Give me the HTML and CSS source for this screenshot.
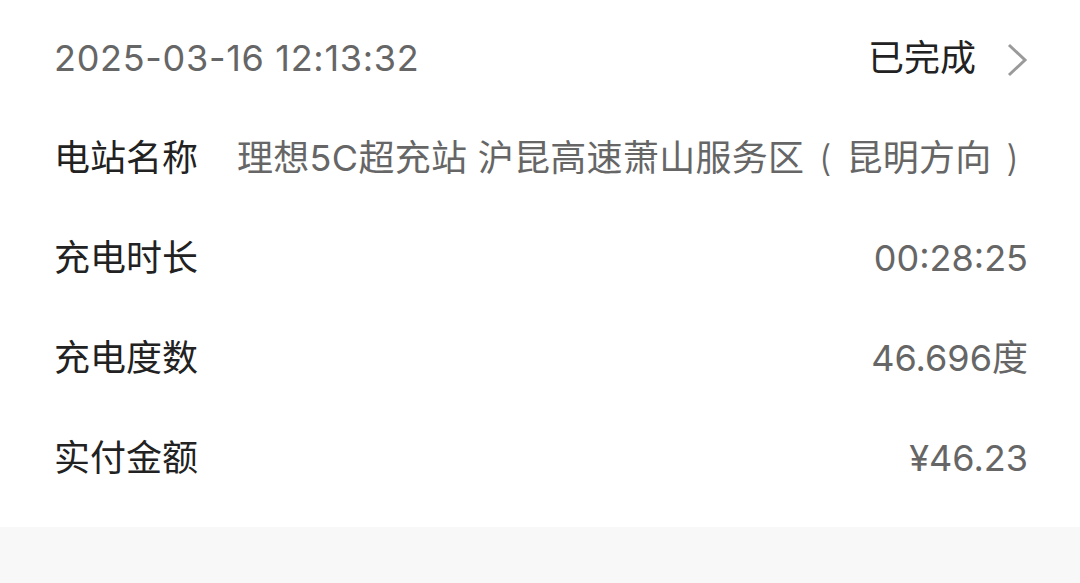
FILE: index.html
```html
<!DOCTYPE html>
<html lang="zh-CN">
<head>
<meta charset="utf-8">
<link rel="stylesheet" href="styles.css">
</head>
<body>
<div class="card">
  <div class="row head">
    <span class="date">2025-03-16 12:13:32</span>
    <span class="status">已完成
      <svg class="chev" width="22" height="34" viewBox="0 0 22 34"><path d="M3 2 L19 17 L3 32" fill="none" stroke="#9a9a9a" stroke-width="3"/></svg>
    </span>
  </div>
  <div class="row">
    <span class="label">电站名称</span>
    <span class="value station">理想5C超充站 沪昆高速萧山服务区<span class="paren">(</span>昆明方向<span class="paren">)</span></span>
  </div>
  <div class="row">
    <span class="label">充电时长</span>
    <span class="value">00:28:25</span>
  </div>
  <div class="row">
    <span class="label">充电度数</span>
    <span class="value">46.696度</span>
  </div>
  <div class="row">
    <span class="label">实付金额</span>
    <span class="value">¥46.23</span>
  </div>
</div>
</body>
</html>
```
FILE: styles.css
```css
html, body {
  margin: 0;
  padding: 0;
  background: #f8f8f8;
  height: 100%;
}
body {
  font-family: "Inter", "Noto Sans CJK SC", sans-serif;
}
.card {
  background: #ffffff;
  padding: 8px 52px 19px 54px;
}
.row {
  height: 100px;
  display: flex;
  align-items: center;
  justify-content: space-between;
  font-size: 36px;
  line-height: 1;
}
.date {
  color: #666666;
  letter-spacing: 0.7px;
}
.status {
  color: #222222;
  display: flex;
  align-items: center;
  gap: 30px;
}
.chev {
  display: block;
  margin-top: 3px;
}
.label {
  color: #222222;
  flex: none;
}
.value {
  color: #666666;
}
.station {
  margin-left: 39px;
  flex: 1;
  white-space: nowrap;
  letter-spacing: 0.3px;
}
.paren {
  display: inline-block;
  width: 42px;
  text-align: center;
  font-weight: 300;
}
```
